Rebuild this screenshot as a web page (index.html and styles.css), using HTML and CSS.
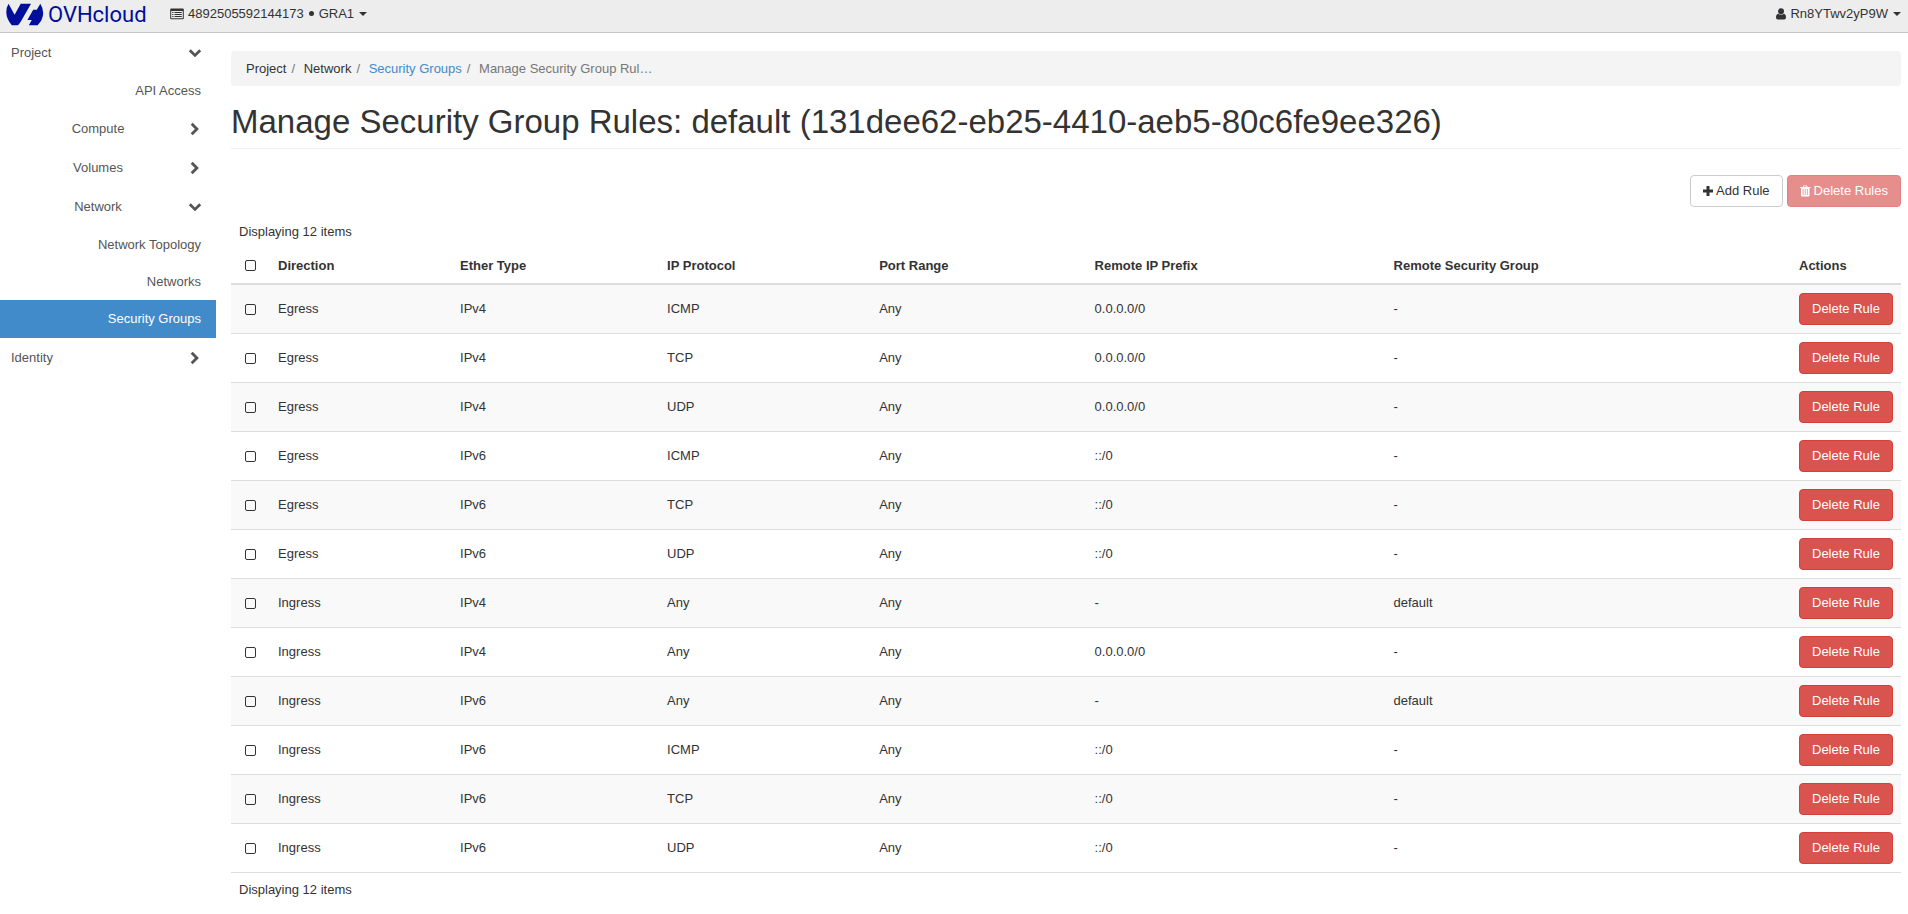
FILE: index.html
```
<!DOCTYPE html>
<html lang="en">
<head>
<meta charset="utf-8">
<title>Manage Security Group Rules</title>
<link rel="stylesheet" href="styles.css">
</head>
<body>
<svg class="sprite" aria-hidden="true">
  <symbol id="down" viewBox="0 0 14 14"><path d="M0.8 5.2 2.8 3.2 7 7.4l4.2-4.2 2 2L7 11.2z"/></symbol>
  <symbol id="right" viewBox="0 0 14 14"><path d="M4.7 0.8 2.7 2.8 6.9 7l-4.2 4.2 2 2L10.9 7z"/></symbol>
</svg>
<header class="topbar">
  <a class="brand" href="#" aria-label="OVHcloud">
    <svg class="mark" viewBox="0 0 38 24"><path d="M2.5 0.8 8.6 11.8 14.7 0.8H25L15 18.2Q12.5 22.3 11.6 22.3H5.8Q0.5 16 0.3 9.5 0.2 4.5 2.5 0.8zM34.3 0.8Q37.2 5 37.2 10.3 37 16.8 31.6 22.3H22.8L25.8 17H21.4L27.2 6.8H30.8z"/></svg>
    <span class="wordmark">OVHcloud</span>
  </a>
  <button class="menu" type="button">
    <svg class="i-list" viewBox="0 0 14 12"><path fill-rule="evenodd" d="M1.2 0.5h11.6q1 0 1 1v8.7q0 1-1 1H1.2q-1 0-1-1V1.5q0-1 1-1zM1.2 3v7.2h11.6V3zM2.2 4h1.3v1H2.2zM4.5 4h7.3v1H4.5zM2.2 6h1.3v1H2.2zM4.5 6h7.3v1H4.5zM2.2 8h1.3v1H2.2zM4.5 8h7.3v1H4.5z"/></svg>
    <span>4892505592144173</span><i class="dot"></i><span>GRA1</span><i class="caret"></i>
  </button>
  <button class="menu user" type="button">
    <svg class="i-user" viewBox="0 0 10 12"><path d="M5 0.3a3 3 0 0 1 3 3 3 3 0 0 1-6 0 3 3 0 0 1 3-3zM2 5.700q3 2.200 6 0 2 .5 2 3.800 0 2-1.800 2H1.800Q0 11.500 0 9.500 0 6.200 2 5.700z"/></svg>
    <span>Rn8YTwv2yP9W</span><i class="caret"></i>
  </button>
</header>
<div class="layout">
  <nav class="sidebar">
    <a class="group" href="#">Project<svg class="chev"><use href="#down"/></svg></a>
    <a class="item" href="#">API Access</a>
    <a class="group sub" href="#"><span>Compute</span><svg class="chev"><use href="#right"/></svg></a>
    <a class="group sub" href="#"><span>Volumes</span><svg class="chev"><use href="#right"/></svg></a>
    <a class="group sub" href="#"><span>Network</span><svg class="chev"><use href="#down"/></svg></a>
    <a class="item" href="#">Network Topology</a>
    <a class="item" href="#">Networks</a>
    <a class="item active" href="#">Security Groups</a>
    <a class="group" href="#">Identity<svg class="chev"><use href="#right"/></svg></a>
  </nav>
  <main class="content">
    <ol class="breadcrumb">
      <li>Project</li><li>Network</li><li><a href="#">Security Groups</a></li><li class="current">Manage Security Group Rul…</li>
    </ol>
    <h1>Manage Security Group Rules: default (131dee62-eb25-4410-aeb5-80c6fe9ee326)</h1>
    <div class="actions">
      <button class="btn" type="button"><svg class="i-plus" viewBox="0 0 10 10"><path d="M3.500 0h3v3.500H10v3H6.500V10h-3V6.500H0v-3h3.500z"/></svg>Add Rule</button>
      <button class="btn danger" type="button" disabled><svg class="i-trash" viewBox="0 0 11 12"><path fill-rule="evenodd" d="M3.500 0.500h3.500L7.700 2H10.500v1H9.500v7.500q0 1-1 1H2q-1 0-1-1V3H0V2h2.800zM4 1.300 3.700 2h3.100l-.3-.7zM2.700 4v6h.8V4zM4.800 4v6h.8V4zM6.900 4v6h.8V4z"/></svg>Delete Rules</button>
    </div>
    <p class="count">Displaying 12 items</p>
    <table class="rules">
      <colgroup><col class="c-check"><col class="c-dir"><col class="c-ether"><col class="c-proto"><col class="c-port"><col class="c-prefix"><col class="c-group"><col class="c-act"></colgroup>
      <thead><tr><th><input type="checkbox" aria-label="Select all"></th><th>Direction</th><th>Ether Type</th><th>IP Protocol</th><th>Port Range</th><th>Remote IP Prefix</th><th>Remote Security Group</th><th>Actions</th></tr></thead>
      <tbody>
        <tr><td><input type="checkbox" aria-label="Select rule"></td><td>Egress</td><td>IPv4</td><td>ICMP</td><td>Any</td><td>0.0.0.0/0</td><td>-</td><td><button class="btn danger" type="button">Delete Rule</button></td></tr>
        <tr><td><input type="checkbox" aria-label="Select rule"></td><td>Egress</td><td>IPv4</td><td>TCP</td><td>Any</td><td>0.0.0.0/0</td><td>-</td><td><button class="btn danger" type="button">Delete Rule</button></td></tr>
        <tr><td><input type="checkbox" aria-label="Select rule"></td><td>Egress</td><td>IPv4</td><td>UDP</td><td>Any</td><td>0.0.0.0/0</td><td>-</td><td><button class="btn danger" type="button">Delete Rule</button></td></tr>
        <tr><td><input type="checkbox" aria-label="Select rule"></td><td>Egress</td><td>IPv6</td><td>ICMP</td><td>Any</td><td>::/0</td><td>-</td><td><button class="btn danger" type="button">Delete Rule</button></td></tr>
        <tr><td><input type="checkbox" aria-label="Select rule"></td><td>Egress</td><td>IPv6</td><td>TCP</td><td>Any</td><td>::/0</td><td>-</td><td><button class="btn danger" type="button">Delete Rule</button></td></tr>
        <tr><td><input type="checkbox" aria-label="Select rule"></td><td>Egress</td><td>IPv6</td><td>UDP</td><td>Any</td><td>::/0</td><td>-</td><td><button class="btn danger" type="button">Delete Rule</button></td></tr>
        <tr><td><input type="checkbox" aria-label="Select rule"></td><td>Ingress</td><td>IPv4</td><td>Any</td><td>Any</td><td>-</td><td>default</td><td><button class="btn danger" type="button">Delete Rule</button></td></tr>
        <tr><td><input type="checkbox" aria-label="Select rule"></td><td>Ingress</td><td>IPv4</td><td>Any</td><td>Any</td><td>0.0.0.0/0</td><td>-</td><td><button class="btn danger" type="button">Delete Rule</button></td></tr>
        <tr><td><input type="checkbox" aria-label="Select rule"></td><td>Ingress</td><td>IPv6</td><td>Any</td><td>Any</td><td>-</td><td>default</td><td><button class="btn danger" type="button">Delete Rule</button></td></tr>
        <tr><td><input type="checkbox" aria-label="Select rule"></td><td>Ingress</td><td>IPv6</td><td>ICMP</td><td>Any</td><td>::/0</td><td>-</td><td><button class="btn danger" type="button">Delete Rule</button></td></tr>
        <tr><td><input type="checkbox" aria-label="Select rule"></td><td>Ingress</td><td>IPv6</td><td>TCP</td><td>Any</td><td>::/0</td><td>-</td><td><button class="btn danger" type="button">Delete Rule</button></td></tr>
        <tr><td><input type="checkbox" aria-label="Select rule"></td><td>Ingress</td><td>IPv6</td><td>UDP</td><td>Any</td><td>::/0</td><td>-</td><td><button class="btn danger" type="button">Delete Rule</button></td></tr>
      </tbody>
    </table>
    <p class="count">Displaying 12 items</p>
  </main>
</div>
</body>
</html>
```
FILE: styles.css
```
* { box-sizing: border-box; }
body {
  margin: 0;
  background: #fff;
  color: #333;
  font: 13px/19px "Liberation Sans", Arial, sans-serif;
}
a { color: inherit; text-decoration: none; }
svg { fill: currentColor; flex: none; }
.sprite { display: none; }

.topbar {
  display: flex;
  align-items: flex-start;
  height: 33px;
  padding: 0 7px 0 6px;
  background: #ededed;
  border-bottom: 1px solid #c4c4c4;
}
.brand {
  display: flex;
  gap: 4px;
  width: 164px;
  padding-top: 3px;
  color: #000e9c;
}
.mark { width: 38px; height: 24px; }
.wordmark { font: 400 22px/24px Roboto, sans-serif; }
.menu {
  display: flex;
  align-items: center;
  gap: 4px;
  padding: 4px 0;
  border: 0;
  background: none;
  color: #333;
  font: inherit;
}
.user { margin-left: auto; }
.i-list { width: 14px; height: 12px; }
.i-user { width: 10px; height: 12px; }
.dot {
  width: 5px;
  height: 5px;
  margin: 0 1px;
  border-radius: 50%;
  background: #333;
}
.caret {
  margin-left: 1px;
  border: 4px solid transparent;
  border-top-color: #333;
  border-bottom: 0;
}

.layout { display: flex; }
.sidebar { flex: none; width: 216px; color: #555; }
.group, .item { display: flex; align-items: center; }
.group {
  justify-content: space-between;
  height: 39px;
  padding: 0 14px 0 11px;
}
.sub { padding-left: 8px; }
.sub span { flex: 1; text-align: center; }
.chev { width: 14px; height: 14px; }
.item {
  justify-content: flex-end;
  height: 37px;
  padding-right: 15px;
}
.active { height: 38px; padding-bottom: 1px; background: #428bca; color: #fff; }

.content { flex: 1; min-width: 0; padding: 18px 7px 0 15px; }
.breadcrumb {
  display: flex;
  margin: 0;
  padding: 8px 15px;
  list-style: none;
  background: #f4f4f4;
  border-radius: 4px;
}
.breadcrumb li + li::before { content: "/\00a0"; padding: 0 5px; color: #777; }
.breadcrumb a { color: #428bca; }
.current { color: #777; }
h1 {
  margin: 18px 0 26px;
  padding-bottom: 8px;
  border-bottom: 1px solid #eee;
  font-size: 33px;
  line-height: 36px;
  font-weight: 400;
}
.actions { display: flex; justify-content: flex-end; gap: 4px; }
.btn {
  display: inline-flex;
  align-items: center;
  gap: 3px;
  height: 32px;
  padding: 0 12px;
  border: 1px solid #ccc;
  border-radius: 4px;
  background: #fff;
  color: #333;
  font: inherit;
  line-height: 18px;
  white-space: nowrap;
}
.danger { background: #d9534f; border-color: #d43f3a; color: #fff; }
.btn:disabled { opacity: 0.65; }
.i-plus { width: 10px; height: 10px; }
.i-trash { width: 11px; height: 12px; }
.count { margin: 0; padding: 8px; line-height: 18px; }
.actions + .count { padding-top: 16px; padding-bottom: 7px; }

.rules { width: 100%; table-layout: fixed; border-collapse: separate; border-spacing: 0; }
.c-check { width: 39px; }
.c-dir { width: 10.9%; }
.c-ether { width: 12.4%; }
.c-proto { width: 12.7%; }
.c-port { width: 12.9%; }
.c-prefix { width: 17.9%; }
.c-act { width: 110px; }
.rules th, .rules td {
  padding: 8px;
  text-align: left;
  vertical-align: middle;
  border-bottom: 1px solid #ddd;
}
.rules th { border-bottom-width: 2px; }
.rules td { line-height: 18px; }
.rules tbody tr:nth-child(odd) { background: #f9f9f9; }
.rules .btn { display: flex; }
.rules input {
  appearance: none;
  display: block;
  width: 11px;
  height: 11px;
  margin: 0 0 0 6px;
  border: 1px solid #333;
  border-radius: 2px;
}
```
